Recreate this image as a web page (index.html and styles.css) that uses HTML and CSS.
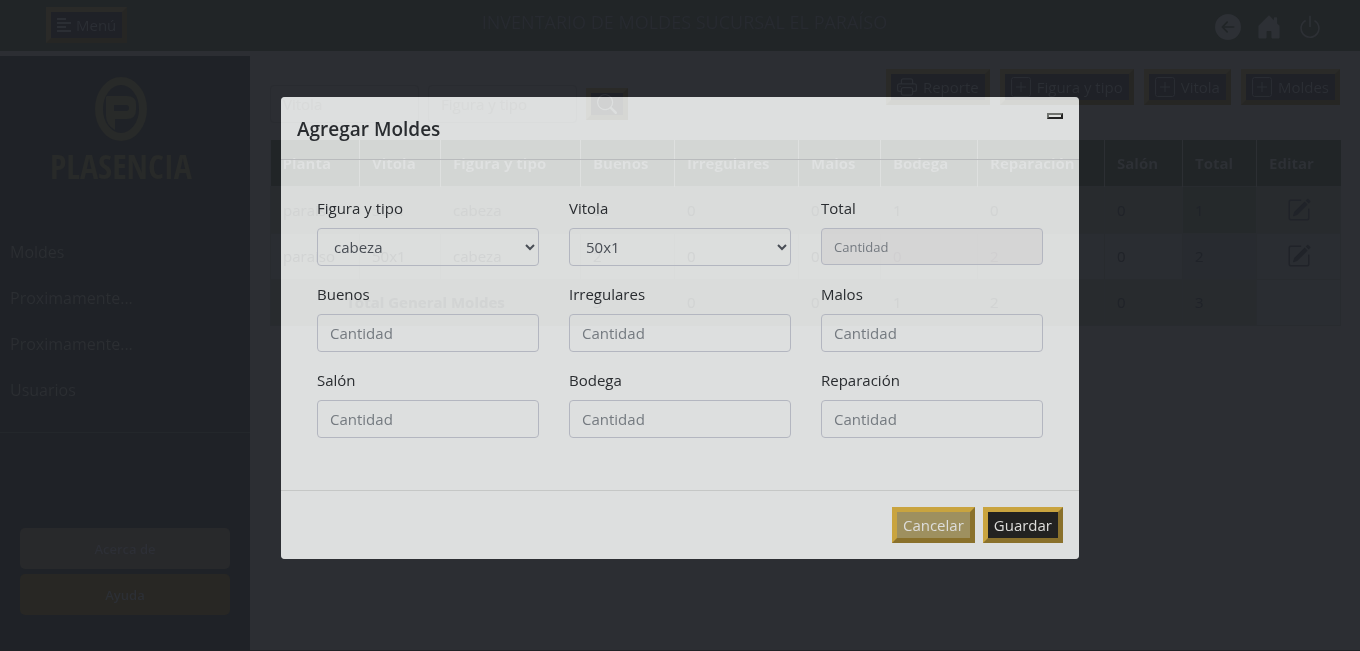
FILE: index.html
```html
<!DOCTYPE html>
<html lang="es">
<head>
<meta charset="utf-8">
<meta name="viewport" content="width=device-width, initial-scale=1">
<title>Inventario de moldes</title>
<link rel="stylesheet" href="styles.css">
</head>
<body>
<header class="topbar">
  <div class="topbar-side">
    <button type="button" class="btn btn-menu"><svg class="icon-menu" viewBox="0 0 14 15" fill="currentColor"><path d="M0 0h9v2H0zM0 4h14v2H0zM0 8h9v2H0zM0 12h14v2H0z"/></svg>Menú</button>
  </div>
  <h1 class="topbar-title">INVENTARIO DE MOLDES SUCURSAL EL PARAÍSO</h1>
  <nav class="topbar-icons">
    <a href="#atras" aria-label="Atrás"><svg width="26" height="26" viewBox="0 0 16 16" fill="currentColor"><path d="M8 0a8 8 0 1 0 0 16A8 8 0 0 0 8 0zm3.500 7.500a.5.5 0 0 1 0 1H5.707l2.147 2.146a.5.5 0 0 1-.708.708l-3-3a.5.5 0 0 1 0-.708l3-3a.5.5 0 1 1 .708.708L5.707 7.500H11.500z"/></svg></a>
    <a href="#inicio" aria-label="Inicio"><svg width="26" height="26" viewBox="0 0 16 16" fill="currentColor"><path d="M6.500 14.500v-3.505c0-.245.25-.495.5-.495h2c.25 0 .5.25.5.5v3.500a.5.5 0 0 0 .5.5h4a.5.5 0 0 0 .5-.5v-7a.5.5 0 0 0-.146-.354L13 5.793V2.500a.5.5 0 0 0-.5-.5h-1a.5.5 0 0 0-.5.5v1.293L8.354 1.146a.5.5 0 0 0-.708 0l-6 6A.5.5 0 0 0 1.500 7.500v7a.5.5 0 0 0 .5.5h4a.5.5 0 0 0 .5-.5z"/></svg></a>
    <a href="#salir" aria-label="Salir"><svg width="26" height="26" viewBox="0 0 16 16" fill="currentColor"><path d="M7.500 1v7h1V1h-1z"/><path d="M3 8.812a4.999 4.999 0 0 1 2.578-4.375l-.485-.874A6 6 0 1 0 11 3.616l-.501.865A5 5 0 1 1 3 8.812z"/></svg></a>
  </nav>
</header>
<div class="layout">
  <aside class="sidebar">
    <div class="logo">
      <svg width="52" height="64" viewBox="0 0 52 64"><ellipse cx="26" cy="32" rx="22" ry="28" fill="none" stroke="currentColor" stroke-width="8"/><path fill="currentColor" fill-rule="evenodd" d="M12 19h20q9 0 9 8v6q0 9-9 9H20v11q-9-5-9-14V20zM19 28v6h12q3 0 3-3t-3-3z"/></svg>
      <span class="logo-name">PLASENCIA</span>
    </div>
    <nav class="menu">
      <a href="#moldes">Moldes</a>
      <a href="#p1">Proximamente...</a>
      <a href="#p2">Proximamente...</a>
      <a href="#usuarios">Usuarios</a>
    </nav>
    <div class="side-actions">
      <a class="side-btn" href="#acerca">Acerca de</a>
      <a class="side-btn side-btn-gold" href="#ayuda">Ayuda</a>
    </div>
  </aside>
  <main class="content">
    <div class="toolbar">
      <form class="search">
        <input class="search-input" type="text" placeholder="Vitola" aria-label="Vitola">
        <input class="search-input" type="text" placeholder="Figura y tipo" aria-label="Figura y tipo">
        <button type="button" class="btn btn-search" aria-label="Buscar"><svg width="20" height="20" viewBox="0 0 16 16" fill="currentColor"><path d="M11.742 10.344a6.500 6.500 0 1 0-1.397 1.398c.03.04.062.078.098.115l3.850 3.850a1 1 0 0 0 1.415-1.414l-3.850-3.850a1 1 0 0 0-.116-.099zM12 6.500a5.500 5.500 0 1 1-11 0 5.500 5.500 0 0 1 11 0z"/></svg></button>
      </form>
      <div class="actions">
        <button type="button" class="btn"><svg width="20" height="20" viewBox="0 0 16 16" fill="currentColor"><path d="M2.500 8a.5.5 0 1 0 0-1 .5.5 0 0 0 0 1z"/><path d="M5 1a2 2 0 0 0-2 2v2H2a2 2 0 0 0-2 2v3a2 2 0 0 0 2 2h1v1a2 2 0 0 0 2 2h6a2 2 0 0 0 2-2v-1h1a2 2 0 0 0 2-2V7a2 2 0 0 0-2-2h-1V3a2 2 0 0 0-2-2H5zM4 3a1 1 0 0 1 1-1h6a1 1 0 0 1 1 1v2H4V3zm1 5a2 2 0 0 0-2 2v1H2a1 1 0 0 1-1-1V7a1 1 0 0 1 1-1h12a1 1 0 0 1 1 1v3a1 1 0 0 1-1 1h-1v-1a2 2 0 0 0-2-2H5zm7 2v3a1 1 0 0 1-1 1H5a1 1 0 0 1-1-1v-3a1 1 0 0 1 1-1h6a1 1 0 0 1 1 1z"/></svg>Reporte</button>
        <button type="button" class="btn"><svg width="20" height="20" viewBox="0 0 20 20" fill="none" stroke="currentColor"><rect x=".6" y=".6" width="18.800" height="18.800" rx="2"/><path d="M10 5v10M5 10h10"/></svg>Figura y tipo</button>
        <button type="button" class="btn"><svg width="20" height="20" viewBox="0 0 20 20" fill="none" stroke="currentColor"><rect x=".6" y=".6" width="18.800" height="18.800" rx="2"/><path d="M10 5v10M5 10h10"/></svg>Vitola</button>
        <button type="button" class="btn"><svg width="20" height="20" viewBox="0 0 20 20" fill="none" stroke="currentColor"><rect x=".6" y=".6" width="18.800" height="18.800" rx="2"/><path d="M10 5v10M5 10h10"/></svg>Moldes</button>
      </div>
    </div>
    <table class="stock">
      <colgroup><col class="c-planta"><col class="c-vitola"><col class="c-figura"><col class="c-buenos"><col class="c-irreg"><col class="c-malos"><col class="c-bodega"><col class="c-repar"><col class="c-salon"><col class="c-total"><col class="c-editar"></colgroup>
      <thead><tr><th>Planta</th><th>Vitola</th><th>Figura y tipo</th><th>Buenos</th><th>Irregulares</th><th>Malos</th><th>Bodega</th><th>Reparación</th><th>Salón</th><th>Total</th><th>Editar</th></tr></thead>
      <tbody>
        <tr class="odd"><td>paraiso</td><td>50x1</td><td>cabeza</td><td>0</td><td>0</td><td>0</td><td>1</td><td>0</td><td>0</td><td class="sum">1</td><td class="edit"><a href="#e1" aria-label="Editar"><svg width="24" height="24" viewBox="0 0 16 16" fill="currentColor"><path d="M15.502 1.940a.5.5 0 0 1 0 .706L14.459 3.690l-2-2L13.502.646a.5.5 0 0 1 .707 0l1.293 1.293zm-1.750 2.456-2-2L4.939 9.210a.5.5 0 0 0-.121.196l-.805 2.414a.25.25 0 0 0 .316.316l2.414-.805a.5.5 0 0 0 .196-.120l6.813-6.814z"/><path d="M1 13.500A1.500 1.500 0 0 0 2.500 15h11a1.500 1.500 0 0 0 1.500-1.500v-6a.5.5 0 0 0-1 0v6a.5.5 0 0 1-.5.5h-11a.5.5 0 0 1-.5-.5v-11a.5.5 0 0 1 .5-.5H9a.5.5 0 0 0 0-1H2.500A1.500 1.500 0 0 0 1 2.500v11z"/></svg></a></td></tr>
        <tr><td>paraiso</td><td>50x1</td><td>cabeza</td><td>2</td><td>0</td><td>0</td><td>0</td><td>2</td><td>0</td><td class="sum sum-plain">2</td><td class="edit"><a href="#e2" aria-label="Editar"><svg width="24" height="24" viewBox="0 0 16 16" fill="currentColor"><path d="M15.502 1.940a.5.5 0 0 1 0 .706L14.459 3.690l-2-2L13.502.646a.5.5 0 0 1 .707 0l1.293 1.293zm-1.750 2.456-2-2L4.939 9.210a.5.5 0 0 0-.121.196l-.805 2.414a.25.25 0 0 0 .316.316l2.414-.805a.5.5 0 0 0 .196-.120l6.813-6.814z"/><path d="M1 13.500A1.500 1.500 0 0 0 2.500 15h11a1.500 1.500 0 0 0 1.500-1.500v-6a.5.5 0 0 0-1 0v6a.5.5 0 0 1-.5.5h-11a.5.5 0 0 1-.5-.5v-11a.5.5 0 0 1 .5-.5H9a.5.5 0 0 0 0-1H2.500A1.500 1.500 0 0 0 1 2.500v11z"/></svg></a></td></tr>
        <tr class="odd"><th class="grand" colspan="3">Total General Moldes</th><td>3</td><td>0</td><td>0</td><td>1</td><td>2</td><td>0</td><td>3</td><td class="blank"></td></tr>
      </tbody>
    </table>
  </main>
</div>
<div class="overlay">
  <form class="modal" role="dialog" aria-labelledby="modal-title">
    <div class="modal-header">
      <h2 class="modal-title" id="modal-title">Agregar Moldes</h2>
      <button type="button" class="modal-close" aria-label="Cerrar"></button>
    </div>
    <div class="modal-body">
      <div class="field"><label for="figura">Figura y tipo</label><select class="control" id="figura"><option>cabeza</option></select></div>
      <div class="field"><label for="vitola">Vitola</label><select class="control" id="vitola"><option>50x1</option></select></div>
      <div class="field"><label for="total">Total</label><input class="control control-total" id="total" placeholder="Cantidad" readonly></div>
      <div class="field"><label for="buenos">Buenos</label><input class="control" id="buenos" placeholder="Cantidad"></div>
      <div class="field"><label for="irregulares">Irregulares</label><input class="control" id="irregulares" placeholder="Cantidad"></div>
      <div class="field"><label for="malos">Malos</label><input class="control" id="malos" placeholder="Cantidad"></div>
      <div class="field"><label for="salon">Salón</label><input class="control" id="salon" placeholder="Cantidad"></div>
      <div class="field"><label for="bodega">Bodega</label><input class="control" id="bodega" placeholder="Cantidad"></div>
      <div class="field"><label for="reparacion">Reparación</label><input class="control" id="reparacion" placeholder="Cantidad"></div>
    </div>
    <div class="modal-footer">
      <button type="button" class="btn btn-cancel">Cancelar</button>
      <button type="button" class="btn btn-save">Guardar</button>
    </div>
  </form>
</div>
</body>
</html>
```

FILE: styles.css
```css
* { box-sizing: border-box; }
body {
  margin: 0;
  min-height: 100vh;
  display: flex;
  flex-direction: column;
  background: #2c2e33;
  color: #222529;
  font: 15px/24px "Open Sans", "Noto Sans", sans-serif;
}
a { color: inherit; text-decoration: none; }
svg { display: block; flex: none; }
button, input, select { font: inherit; }

.topbar {
  display: grid;
  grid-template-columns: 1fr auto 1fr;
  height: 51px;
  padding: 7px 37px 8px 46px;
  background: #212527;
}
.topbar-title { margin: 0; padding-top: 2px; font-size: 18px; font-weight: 400; line-height: 26px; color: #272a30; }
.topbar-icons { display: flex; justify-content: flex-end; align-items: center; gap: 15px; padding-top: 4px; color: #2d3035; }

.btn {
  display: inline-flex;
  align-items: center;
  gap: 6px;
  height: 36px;
  padding: 0 6px;
  border: 5px solid;
  border-color: #2a2a28 #262624 #262624 #2a2a28;
  border-radius: 0;
  background: #1f2127;
  color: #2b2e34;
}
.btn-menu { gap: 5px; }
.icon-menu { width: 14px; height: 15px; }

.layout { flex: 1; display: flex; padding-top: 5px; border-bottom: 1px solid #202226; }
.sidebar { width: 250px; flex: none; display: flex; flex-direction: column; background: #1f2227; }
.logo { display: flex; flex-direction: column; align-items: center; padding: 21px 8px 0 0; color: #282a29; }
.logo-name { padding-top: 3px; font: bold 34px/44px "Open Sans Condensed", "Roboto Condensed", "Liberation Sans Narrow", "DejaVu Sans Condensed", sans-serif; }
.menu {
  display: flex;
  flex-direction: column;
  gap: 22px;
  margin-top: 52px;
  padding: 0 10px 30px;
  border-bottom: 1px solid #23272b;
  color: #2b2e32;
  font-size: 16px;
}
.side-actions { display: flex; flex-direction: column; gap: 5px; margin: auto 20px 35px; }
.side-btn { padding: 9px 0 8px; border-radius: 5px; background: #28292b; color: #2d2f36; font-size: 13px; font-weight: 600; text-align: center; }
.side-btn-gold { background: #282724; color: #2c2f35; }

.content { flex: 1; min-width: 0; padding: 13px 20px 0; }
.toolbar { display: flex; justify-content: space-between; height: 71px; }
.search { display: flex; gap: 9px; padding-top: 16px; }
.search-input { width: 149px; height: 38px; padding: 0 12px; border: 1px solid #292b30; border-radius: 4px; background: transparent; color: #292b30; }
.search-input::placeholder { color: #27292e; opacity: 1; }
.btn-search { height: 32px; margin-top: 3px; }
.actions { display: flex; gap: 10px; }

.stock { width: 100%; table-layout: fixed; border-collapse: collapse; color: #202329; background: #2a2d32; }
.stock th, .stock td { height: 46px; padding: 0 12px; text-align: left; border: 1px solid #282b2f; }
.stock thead th { border: 0; border-left: 1px solid #2c2f33; background: #212527; color: #2d3035; font-weight: 700; }
.stock thead th:first-child { border-left: 0; }
.stock tbody tr:first-child td { height: 47px; }
.stock .odd { background: #282b2e; }
.stock .sum { background: #25292b; }
.stock .sum-plain { background: #282b30; }
.stock .blank { background: #2a2d32; }
.stock .grand { text-align: center; }
.stock .edit svg { margin: 0 auto; }
.c-planta { width: 89px; }
.c-vitola { width: 81px; }
.c-figura { width: 140px; }
.c-buenos { width: 94px; }
.c-irreg { width: 124px; }
.c-malos { width: 82px; }
.c-bodega { width: 97px; }
.c-repar { width: 127px; }
.c-salon { width: 78px; }
.c-total { width: 74px; }
.c-editar { width: 84px; }

.overlay { position: fixed; inset: 0; display: flex; justify-content: center; align-items: flex-start; padding-top: 97px; }
.modal {
  width: 798px;
  max-width: 100%;
  border-radius: 4px;
  background: rgba(235, 236, 233, .75);
  backdrop-filter: grayscale(.7) brightness(4);
  color: #292c30;
}
.modal-header { display: flex; justify-content: space-between; align-items: flex-start; padding: 16px 16px 13px; border-bottom: 1px solid #b9bbbd; }
.modal-title { margin: 0; font-size: 19px; font-weight: 600; line-height: 33px; }
.modal-close { width: 16px; height: 6px; padding: 0; border: 2px solid; border-color: #70736f #222 #222 #70736f; background: #e0e2e0; }
.modal-body { display: grid; grid-template-columns: repeat(3, 1fr); gap: 16px 30px; padding: 36px 36px 52px; }
.field { display: flex; flex-direction: column; gap: 8px; height: 70px; }
.control {
  width: 100%;
  height: 38px;
  padding: 0 12px;
  border: 1px solid #b3b6c0;
  border-radius: 4px;
  background: transparent;
  color: #494e55;
}
.control::placeholder { color: #747a80; opacity: 1; }
.control-total { height: 37px; background: rgba(205, 203, 205, .5); font-size: 13px; }
.modal-footer { display: flex; justify-content: flex-end; gap: 8px; padding: 16px; border-top: 1px solid #c5c7c6; }
.btn-cancel, .btn-save { border-color: #c9a43f #8a712c #8a712c #c9a43f; color: #dddddb; }
.btn-cancel { background: #9e905f; }
.btn-save { background: #222221; }
```
